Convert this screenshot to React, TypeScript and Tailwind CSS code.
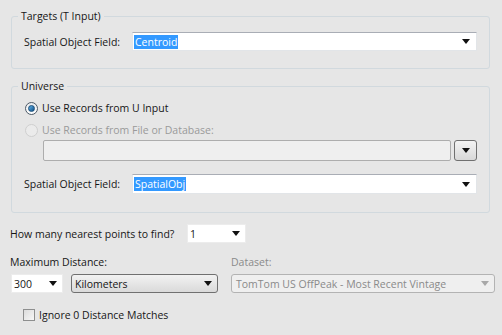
import React from 'react';

const Arrow = ({ color = '#111' }: { color?: string }) => (
  <svg width="8" height="5" viewBox="0 0 8 5" className="shrink-0">
    <polygon points="0,0 8,0 4,5" fill={color} />
  </svg>
);

const Radio = ({ checked, disabled }: { checked?: boolean; disabled?: boolean }) => (
  <div
    className={
      disabled
        ? 'w-[13px] h-[13px] rounded-full border border-[#cfcfcf] bg-[#ebebeb] shrink-0'
        : 'w-[13px] h-[13px] rounded-full border border-[#4e5a66] bg-gradient-to-b from-[#e8ebee] to-[#ffffff] flex items-center justify-center shrink-0'
    }
  >
    {checked && (
      <div className="w-[7px] h-[7px] rounded-full bg-gradient-to-br from-[#5fb3ea] to-[#0d4f86] border border-[#1b4f7a]" />
    )}
  </div>
);

const Field = ({ value, height = 'h-[20px]' }: { value: string; height?: string }) => (
  <div
    className={`flex-1 ${height} bg-white border border-[#e2e5e8] border-t-[#a9adb5] flex items-center pl-[1px] pr-[6px]`}
  >
    <span className="bg-[#3399ff] text-white px-[1px] leading-[14px]">{value}</span>
    <div className="flex-1" />
    <Arrow />
  </div>
);

export default function App() {
  return (
    <div
      className="w-[502px] h-[335px] bg-[#e6e6e6] text-[#161616] text-[10.5px] leading-[14px] flex flex-col pl-[10px] pr-[7px]"
      style={{ fontFamily: '"Open Sans", "Liberation Sans", Arial, sans-serif' }}
    >
      <fieldset className="mt-[9px] ml-[1px] mr-[5px] border border-[#d1d9de] rounded-[3px] px-[12px] pb-[17px] pt-[9px]">
        <legend className="ml-[-6px] px-[3px] leading-[14px]">Targets (T Input)</legend>
        <div className="flex items-center">
          <span className="w-[108px] shrink-0">Spatial Object Field:</span>
          <Field value="Centroid" height="h-[19px]" />
        </div>
      </fieldset>

      <fieldset className="mt-[10px] ml-[1px] mr-[5px] border border-[#d1d9de] rounded-[3px] px-[12px] pb-[18px] pt-[7px]">
        <legend className="ml-[-6px] px-[3px] leading-[14px]">Universe</legend>
        <div className="flex items-center gap-[4px] h-[16px] ml-[1px]">
          <Radio checked />
          <span>Use Records from U Input</span>
        </div>
        <div className="flex items-center gap-[4px] h-[16px] ml-[1px] mt-[6px] text-[#9a9a9a]">
          <Radio disabled />
          <span>Use Records from File or Database:</span>
        </div>
        <div className="flex items-center mt-[2px] ml-[19px] gap-[3px]">
          <div className="flex-1 h-[21px] bg-[#efefef] border border-[#adadad] rounded-[2px]" />
          <div className="w-[23px] h-[21px] border border-[#707070] rounded-[3px] bg-gradient-to-b from-[#f3f3f3] to-[#d8d8d8] flex items-center justify-center">
            <Arrow />
          </div>
        </div>
        <div className="flex items-center mt-[13px]">
          <span className="w-[108px] shrink-0">Spatial Object Field:</span>
          <Field value="SpatialObj" />
        </div>
      </fieldset>

      <div className="flex items-center mt-[11px]">
        <span className="w-[177px] shrink-0">How many nearest points to find?</span>
        <div className="w-[59px] h-[19px] bg-white border border-[#ececec] flex items-center pl-[2px] pr-[5px]">
          <span className="flex-1">1</span>
          <Arrow />
        </div>
      </div>

      <div className="flex mt-[12px] gap-[13px]">
        <div className="flex flex-col w-[208px]">
          <span className="h-[14px]">Maximum Distance:</span>
          <div className="flex mt-[5px] ml-[1px] gap-[8px]">
            <div className="w-[52px] h-[19px] bg-white border border-[#ececec] flex items-center pl-[2px] pr-[5px]">
              <span className="flex-1">300</span>
              <Arrow />
            </div>
            <div className="flex-1 h-[19px] border border-[#707070] rounded-[3px] bg-gradient-to-b from-[#f2f2f2] to-[#dadada] flex items-center pl-[3px] pr-[5px]">
              <span className="flex-1">Kilometers</span>
              <Arrow />
            </div>
          </div>
        </div>
        <div className="flex flex-col flex-1 text-[#8a8a8a]">
          <span className="h-[14px]">Dataset:</span>
          <div className="mt-[5px] h-[19px] border border-[#b3b3b3] rounded-[3px] bg-[#efefef] flex items-center pl-[4px] pr-[5px]">
            <span className="flex-1">TomTom US OffPeak - Most Recent Vintage</span>
            <Arrow color="#a8a8a8" />
          </div>
        </div>
      </div>

      <div className="flex items-center mt-[15px] ml-[13px] gap-[4px]">
        <div className="w-[12px] h-[12px] border border-[#8e8f8f] bg-gradient-to-br from-[#dcdcdc] to-[#f7f7f7]" />
        <span>Ignore 0 Distance Matches</span>
      </div>
    </div>
  );
}
